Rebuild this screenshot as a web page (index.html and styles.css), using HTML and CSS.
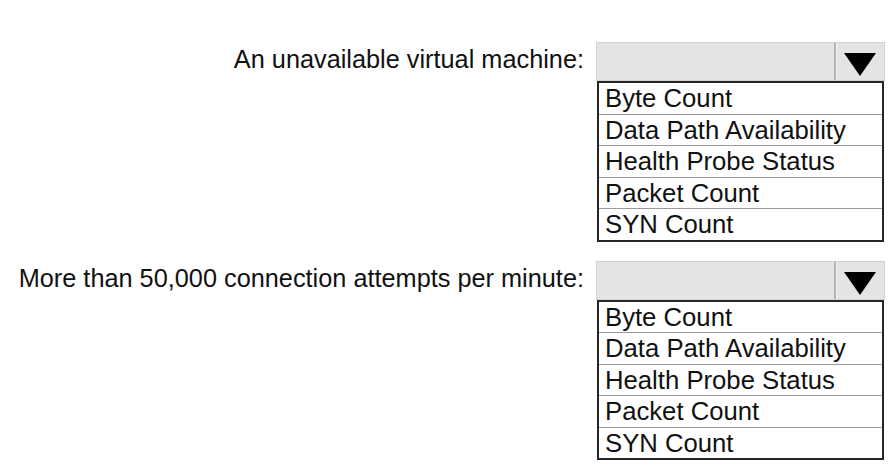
FILE: index.html
```html
<!DOCTYPE html>
<html>
<head>
<meta charset="utf-8">
<link rel="stylesheet" href="styles.css">
</head>
<body>
<div class="form">
  <div class="label">An unavailable virtual machine:</div>
  <div class="dropdown">
    <div class="select">
      <div class="value"></div>
      <div class="arrow"><svg width="32" height="23" viewBox="0 0 32 23"><polygon points="0,0 32,0 16,23" fill="#000"/></svg></div>
    </div>
    <ul class="options">
      <li>Byte Count</li>
      <li>Data Path Availability</li>
      <li>Health Probe Status</li>
      <li>Packet Count</li>
      <li>SYN Count</li>
    </ul>
  </div>

  <div class="label">More than 50,000 connection attempts per minute:</div>
  <div class="dropdown">
    <div class="select">
      <div class="value"></div>
      <div class="arrow"><svg width="32" height="23" viewBox="0 0 32 23"><polygon points="0,0 32,0 16,23" fill="#000"/></svg></div>
    </div>
    <ul class="options">
      <li>Byte Count</li>
      <li>Data Path Availability</li>
      <li>Health Probe Status</li>
      <li>Packet Count</li>
      <li>SYN Count</li>
    </ul>
  </div>
</div>
</body>
</html>
```
FILE: styles.css
```css
html, body {
  margin: 0;
  padding: 0;
  background: #fff;
}
body {
  font-family: "Liberation Sans", Arial, sans-serif;
  color: #111;
}
.form {
  display: grid;
  grid-template-columns: 584px 289px;
  column-gap: 12px;
  row-gap: 19px;
  padding-top: 42px;
}
.label {
  font-size: 25.3px;
  line-height: 34px;
  text-align: right;
  white-space: nowrap;
}
.dropdown {
  display: flex;
  flex-direction: column;
}
.select {
  display: flex;
  height: 39px;
  box-sizing: border-box;
  background: #e4e4e4;
  border: 1px solid #d2d2d2;
}
.value {
  flex: 1;
}
.arrow {
  width: 50px;
  border-left: 2px solid #b4b4b4;
  box-shadow: inset 1px 0 0 #f2f2f2;
  display: flex;
  justify-content: center;
  align-items: center;
  padding-top: 6px;
  box-sizing: border-box;
}
.arrow svg {
  display: block;
}
.options {
  list-style: none;
  margin: 0 1px 0 1px;
  padding: 0;
  border: 2px solid #262626;
}
.options li {
  font-size: 25.7px;
  line-height: 30.5px;
  height: 30.5px;
  padding-left: 6px;
  white-space: nowrap;
}
.options li + li {
  border-top: 1px solid #9a9a9a;
}
```
